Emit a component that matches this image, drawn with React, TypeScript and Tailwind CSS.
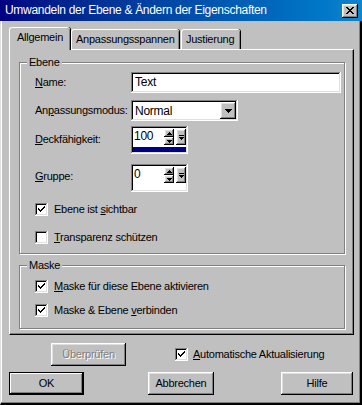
import React from 'react';

const raised =
  'bg-[#c0c0c0] shadow-[inset_-1px_-1px_#000000,inset_1px_1px_#ffffff,inset_-2px_-2px_#808080,inset_2px_2px_#dfdfdf]';
const sunken =
  'bg-white shadow-[inset_-1px_-1px_#ffffff,inset_1px_1px_#808080,inset_-2px_-2px_#dfdfdf,inset_2px_2px_#000000]';

function Key({ children }: { children: React.ReactNode }) {
  return <span className="underline underline-offset-[1px]">{children}</span>;
}

function CheckBox({ checked }: { checked: boolean }) {
  return (
    <span className={`${sunken} w-[13px] h-[13px] shrink-0 flex items-center justify-center`}>
      {checked && (
        <svg width="7" height="7" viewBox="0 0 7 7">
          <path d="M0 2h1v1h1v1h1V3h1V2h1V1h1V0h1v2H6v1H5v1H4v1H3v1H2V5H1V4H0z" fill="#000" />
        </svg>
      )}
    </span>
  );
}

function CheckRow({ checked, children, className = '' }: { checked: boolean; children: React.ReactNode; className?: string }) {
  return (
    <div className={`flex items-center h-[16px] gap-[6px] ${className}`}>
      <CheckBox checked={checked} />
      <span>{children}</span>
    </div>
  );
}

function Arrow({ dir }: { dir: 'up' | 'down' }) {
  return (
    <svg width="5" height="3" viewBox="0 0 5 3">
      {dir === 'up' ? <path d="M2 0h1v1h1v1h1v1H0V2h1V1h1z" fill="#000" /> : <path d="M0 0h5v1H4v1H3v1H2V2H1V1H0z" fill="#000" />}
    </svg>
  );
}

function Spin({ value, filled }: { value: string; filled: boolean }) {
  return (
    <div className={`${sunken} w-[57px] h-[28px] p-[2px] flex flex-col`}>
      <div className="flex h-[20px] items-start">
        <span className="pl-[1px] pt-[2px] w-[31px] text-[12px]">{value}</span>
        <div className="flex flex-col pt-[1px]">
          <span className={`${raised} w-[10px] h-[8px] flex items-center justify-center`}>
            <Arrow dir="up" />
          </span>
          <span className={`${raised} w-[10px] h-[8px] flex items-center justify-center`}>
            <Arrow dir="down" />
          </span>
        </div>
        <span className={`${raised} ml-[2px] mt-[1px] w-[10px] h-[16px] flex flex-col items-center justify-center gap-[1px]`}>
          <span className="w-[5px] h-[1px] bg-black" />
          <Arrow dir="down" />
        </span>
      </div>
      <div className={`h-[5px] ${filled ? 'bg-[#000080]' : 'bg-white'}`} />
    </div>
  );
}

function Group({ title, className, children }: { title: string; className: string; children: React.ReactNode }) {
  return (
    <div className={`relative border border-[#808080] shadow-[1px_1px_0_#ffffff,inset_1px_1px_0_#ffffff] ${className}`}>
      <span className="absolute -top-[8px] left-[7px] px-[2px] bg-[#c0c0c0] leading-[14px]">{title}</span>
      {children}
    </div>
  );
}

function Button({ children, className = '', disabled = false, isDefault = false }: { children: React.ReactNode; className?: string; disabled?: boolean; isDefault?: boolean }) {
  return (
    <div
      className={`flex items-center justify-center h-[23px] ${
        isDefault
          ? 'bg-[#c0c0c0] shadow-[inset_0_0_0_1px_#000000,inset_-2px_-2px_#000000,inset_2px_2px_#ffffff,inset_-3px_-3px_#808080]'
          : raised
      } ${className}`}
    >
      {disabled ? (
        <span className="text-[#808080] [text-shadow:1px_1px_0_#ffffff]">{children}</span>
      ) : (
        <span>{children}</span>
      )}
    </div>
  );
}

const tab =
  'h-[20px] pt-[3px] border-t border-l border-white rounded-tl-[3px] rounded-tr-[3px] shadow-[inset_-1px_0_#808080,1px_0_0_#000000] whitespace-nowrap';

export default function App() {
  return (
    <div
      className="w-[362px] h-[405px] bg-[#c0c0c0] text-black text-[11px] leading-[13px] tracking-[-0.25px] flex flex-col overflow-hidden"
      style={{ fontFamily: '"Liberation Sans", Arial, sans-serif' }}
    >
      <div className="h-[21px] shrink-0 flex items-center justify-between pl-[5px] pr-[4px] bg-gradient-to-r from-[#000080] to-[#1084d0]">
        <span className="text-white text-[12px] tracking-[-0.3px]">Umwandeln der Ebene &amp; Ändern der Eigenschaften</span>
        <span className={`${raised} w-[16px] h-[14px] flex items-center justify-center`}>
          <svg width="8" height="7" viewBox="0 0 8 7">
            <path d="M0 0h2v1h1v1h2V1h1V0h2v1H7v1H6v1H5v1h1v1h1v1h1v1H6V6H5V5H3v1H2v1H0V6h1V5h1V4h1V3H2V2H1V1H0z" fill="#000" />
          </svg>
        </span>
      </div>

      <div className="flex-1 flex flex-col border-r-2 border-b-2 border-l border-r-[#000000] border-b-[#000000] border-l-[#dfdfdf] shadow-[inset_-1px_-1px_#808080,inset_1px_0_#ffffff]">
        <div className="pl-[8px] pt-[6px] flex items-end">
          <div className="relative z-10 -mb-[1px] h-[23px] w-[61px] px-[7px] pt-[3px] bg-[#c0c0c0] border-t border-l border-white rounded-tl-[3px] rounded-tr-[3px] shadow-[inset_-1px_0_#808080,1px_0_0_#000000]">
            Allgemein
          </div>
          <div className={`${tab} w-[108px] ml-[1px] pl-[4px]`}>Anpassungsspannen</div>
          <div className={`${tab} w-[59px] ml-[2px] pl-[4px]`}>Justierung</div>
        </div>

        <div className="ml-[8px] w-[345px] h-[286px] border-t border-l border-white border-r border-b border-r-[#000000] border-b-[#000000] shadow-[inset_-1px_-1px_#808080] pl-[9px] pr-[8px] pt-[12px]">
          <Group title="Ebene" className="h-[192px] pl-[15px] pt-[9px]">
            <div className="flex items-center h-[21px]">
              <span className="w-[96px]">
                <Key>N</Key>ame:
              </span>
              <div className={`${sunken} w-[210px] h-[21px] pl-[4px] pt-[4px] text-[12px]`}>Text</div>
            </div>
            <div className="flex items-center h-[21px] mt-[7px]">
              <span className="w-[96px]">
                An<Key>p</Key>assungsmodus:
              </span>
              <div className={`${sunken} w-[107px] h-[21px] p-[2px] flex`}>
                <span className="flex-1 pl-[2px] pt-[3px] text-[12px]">Normal</span>
                <span className={`${raised} w-[16px] h-[17px] flex items-center justify-center`}>
                  <svg width="7" height="4" viewBox="0 0 7 4">
                    <path d="M0 0h7v1H6v1H5v1H4v1H3V3H2V2H1V1H0z" fill="#000" />
                  </svg>
                </span>
              </div>
            </div>
            <div className="flex items-center h-[28px] mt-[5px]">
              <span className="w-[96px] -mt-[2px]">
                <Key>D</Key>eckfähigkeit:
              </span>
              <Spin value="100" filled />
            </div>
            <div className="flex items-center h-[28px] mt-[10px]">
              <span className="w-[96px] -mt-[4px]">
                <Key>G</Key>ruppe:
              </span>
              <Spin value="0" filled={false} />
            </div>
            <CheckRow checked className="mt-[9px]">
              Ebene ist <Key>s</Key>ichtbar
            </CheckRow>
            <CheckRow checked={false} className="mt-[12px]">
              <Key>T</Key>ransparenz schützen
            </CheckRow>
          </Group>

          <Group title="Maske" className="mt-[11px] h-[64px] pl-[15px] pt-[12px]">
            <CheckRow checked>
              <Key>M</Key>aske für diese Ebene aktivieren
            </CheckRow>
            <CheckRow checked className="mt-[8px]">
              Maske &amp; Ebene <Key>v</Key>erbinden
            </CheckRow>
          </Group>
        </div>

        <div className="flex items-center mt-[8px] pl-[50px] h-[22px]">
          <Button disabled className="w-[75px] h-[22px]">
            Überprüfen
          </Button>
          <div className="flex items-center gap-[5px] ml-[49px]">
            <CheckBox checked />
            <span>
              <Key>A</Key>utomatische Aktualisierung
            </span>
          </div>
        </div>

        <div className="flex items-center mt-[7px] pl-[8px]">
          <Button isDefault className="w-[75px]">
            OK
          </Button>
          <Button className="w-[66px] ml-[64px]">Abbrechen</Button>
          <Button className="w-[72px] ml-[67px]">Hilfe</Button>
        </div>
      </div>
    </div>
  );
}
